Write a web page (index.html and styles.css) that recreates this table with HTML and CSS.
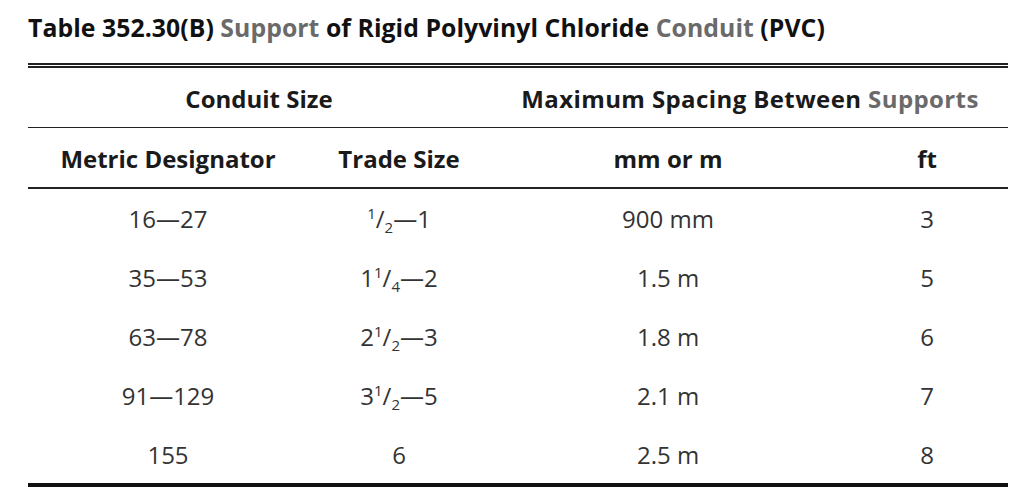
FILE: index.html
```html
<!DOCTYPE html>
<html>
<head>
<meta charset="utf-8">
<link rel="stylesheet" href="styles.css">
</head>
<body>
<div class="page">
  <h1 class="title">Table 352.30(B) <span class="muted">Support</span> of Rigid Polyvinyl Chloride <span class="muted">Conduit</span> (PVC)</h1>
  <table class="tbl">
    <colgroup>
      <col class="c1"><col class="c2"><col class="c3"><col class="c4">
    </colgroup>
    <thead>
      <tr class="h1">
        <th colspan="2">Conduit Size</th>
        <th colspan="2" class="wide">Maximum Spacing Between <span class="muted">Supports</span></th>
      </tr>
      <tr class="h2">
        <th>Metric Designator</th>
        <th>Trade Size</th>
        <th>mm or m</th>
        <th>ft</th>
      </tr>
    </thead>
    <tbody>
      <tr><td>16—27</td><td><sup>1</sup>/<sub>2</sub>—1</td><td>900 mm</td><td>3</td></tr>
      <tr><td>35—53</td><td>1<sup>1</sup>/<sub>4</sub>—2</td><td>1.5 m</td><td>5</td></tr>
      <tr><td>63—78</td><td>2<sup>1</sup>/<sub>2</sub>—3</td><td>1.8 m</td><td>6</td></tr>
      <tr><td>91—129</td><td>3<sup>1</sup>/<sub>2</sub>—5</td><td>2.1 m</td><td>7</td></tr>
      <tr class="last"><td>155</td><td>6</td><td>2.5 m</td><td>8</td></tr>
    </tbody>
  </table>
</div>
</body>
</html>
```
FILE: styles.css
```css
html, body {
  margin: 0;
  padding: 0;
  background: #fff;
}
.page {
  padding: 11px 16px 0 28px;
  font-family: "Open Sans", "Liberation Sans", sans-serif;
  color: #111;
}
.title {
  margin: 0;
  font-size: 24.8px;
  font-weight: 700;
  line-height: 32px;
  color: #111;
  letter-spacing: 0.05px;
}
.muted {
  color: #6a6a6a;
}
.tbl {
  margin-top: 20px;
  width: 980px;
  border-collapse: collapse;
  table-layout: fixed;
  border-top: 5px double #222;
  border-bottom: 4px solid #111;
}
.c1 { width: 280px; }
.c2 { width: 182px; }
.c3 { width: 356px; }
.c4 { width: 162px; }
.tbl th {
  font-weight: 700;
  font-size: 24px;
  line-height: 30px;
  color: #1a1a1a;
  text-align: center;
  padding: 3px 0 0;
}
.tbl th.wide {
  letter-spacing: 0.4px;
  padding-left: 2px;
}
.h1 th {
  height: 56px;
  border-bottom: 1.5px solid #222;
}
.h2 th {
  height: 56px;
  border-bottom: 2px solid #222;
}
.tbl td {
  font-size: 24px;
  line-height: 30px;
  color: #333;
  text-align: center;
  height: 56.8px;
  padding: 2px 0 0;
}
.tbl tr.last td {
  height: 56px;
  padding-top: 3px;
}
.tbl sup, .tbl sub {
  font-size: 15px;
  line-height: 0;
}
.tbl sup { vertical-align: 9px; }
.tbl sub { vertical-align: -5px; }
```
